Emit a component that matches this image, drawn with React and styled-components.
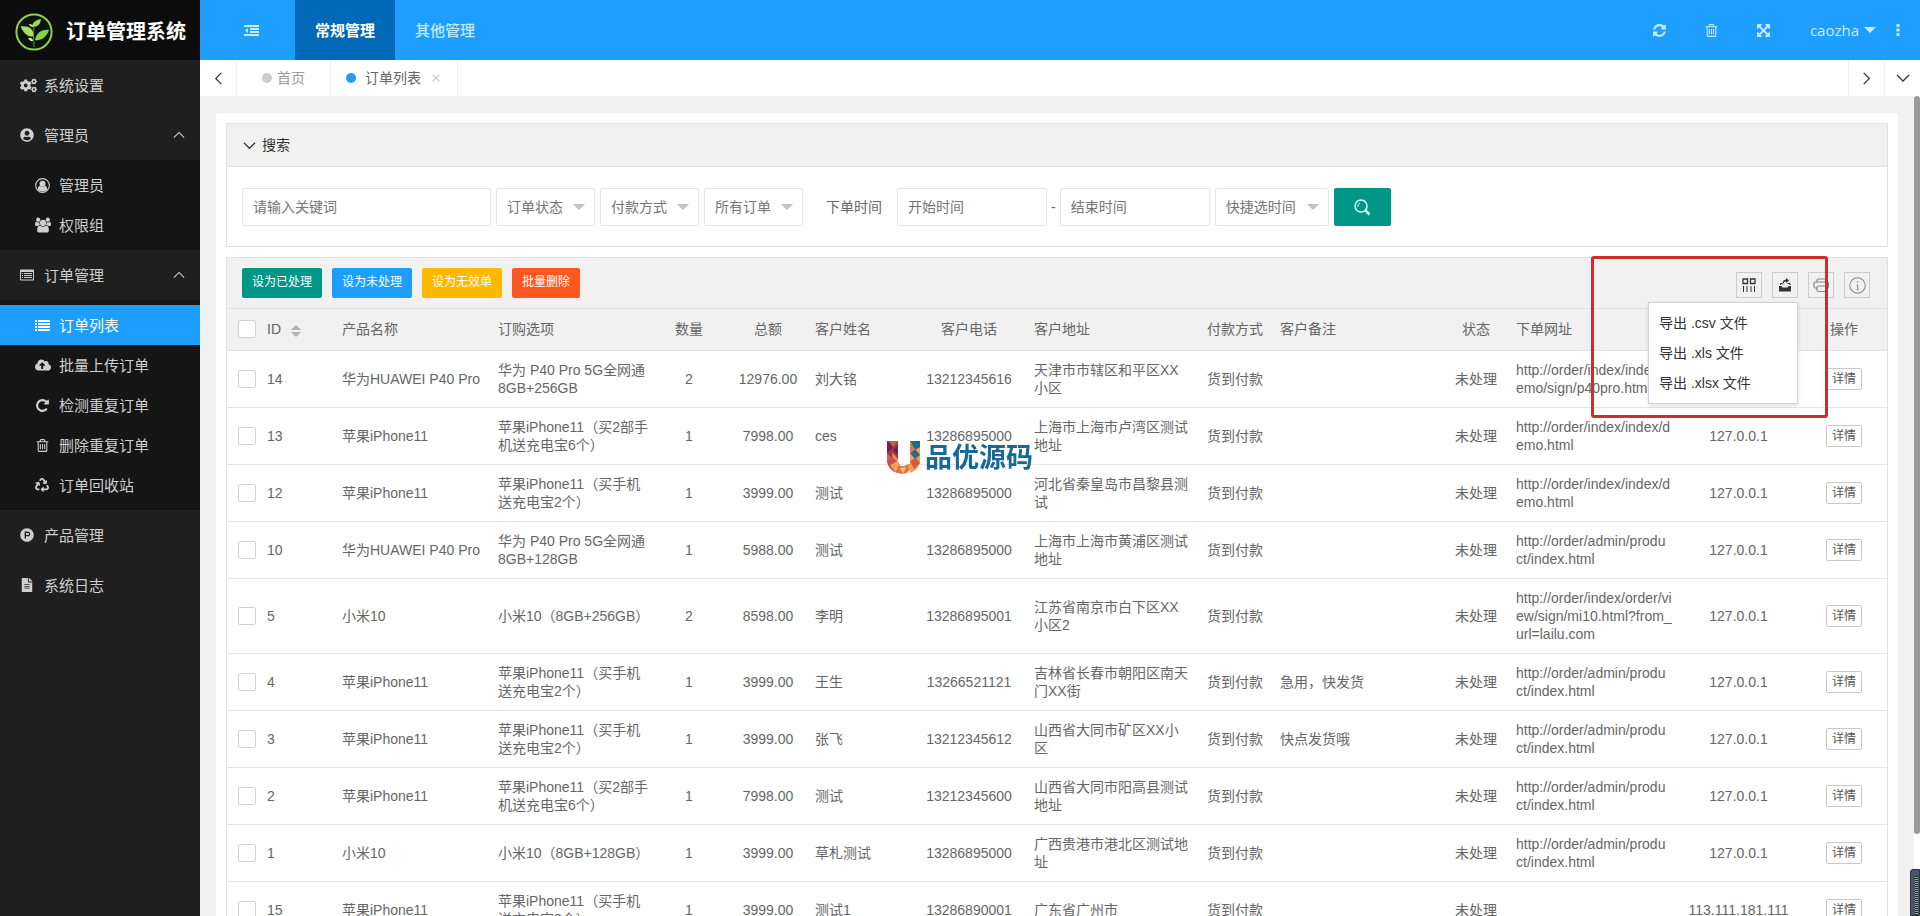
import React, { useState } from "react";
import styled, { createGlobalStyle } from "styled-components";
import {
  FaCogs,
  FaUserCircle,
  FaCloudUploadAlt,
  FaRecycle,
  FaProductHunt,
  FaFileAlt,
} from "react-icons/fa";

const GlobalStyle = createGlobalStyle`
* { box-sizing: border-box; }
body {
  margin: 0;
  color: #666;
  background: #f1f1f1;
  font: 14px/18px "Liberation Sans", "Noto Sans CJK SC", sans-serif;
}
button, input, select { font: inherit; color: inherit; }
button { cursor: pointer; }
a { color: inherit; text-decoration: none; }
ul { list-style: none; margin: 0; padding: 0; }
`;

/* ---------- icons ---------- */

const Svg = ({ size = 14, box = "0 0 1792 1792", children, ...rest }) => (
  <svg width={size} height={size} viewBox={box} fill="currentColor" aria-hidden="true" {...rest}>
    {children}
  </svg>
);

const TrashIcon = ({ size = 15 }) => (
  <Svg size={size}>
    <path d="M704 736v576q0 14-9 23t-23 9h-64q-14 0-23-9t-9-23v-576q0-14 9-23t23-9h64q14 0 23 9t9 23zm256 0v576q0 14-9 23t-23 9h-64q-14 0-23-9t-9-23v-576q0-14 9-23t23-9h64q14 0 23 9t9 23zm256 0v576q0 14-9 23t-23 9h-64q-14 0-23-9t-9-23v-576q0-14 9-23t23-9h64q14 0 23 9t9 23zm128 724v-948h-896v948q0 22 7 40.5t14.5 27 10.5 8.5h832q3 0 10.5-8.5t14.5-27 7-40.5zm-672-1076h448l-48-117q-7-9-17-11h-317q-10 2-17 11zm928 32v64q0 14-9 23t-23 9h-96v948q0 83-47 143.5t-113 60.5h-832q-66 0-113-58.5t-47-141.5v-952h-96q-14 0-23-9t-9-23v-64q0-14 9-23t23-9h309l70-167q15-37 54-63t79-26h320q40 0 79 26t54 63l70 167h309q14 0 23 9t9 23z" />
  </Svg>
);

const GroupIcon = () => (
  <Svg size={16} box="-64 0 1920 1792">
    <path d="M529 896q-162 5-265 128h-134q-82 0-138-40.5t-56-118.5q0-353 124-353 6 0 43.500 21t97.500 42.500 119 21.500q67 0 133-23-5 37-5 66 0 139 81 256zm1071 637q0 120-73 189.500t-194 69.500h-874q-121 0-194-69.500t-73-189.500q0-53 3.500-103.500t14-109 26.500-108.500 43-97.500 62-81 85.500-53.500 111.500-20q10 0 43 21.500t73 48 107 48 135 21.500 135-21.500 107-48 73-48 43-21.500q61 0 111.500 20t85.500 53.500 62 81 43 97.500 26.500 108.500 14 109 3.500 103.500zm-1024-1277q0 106-75 181t-181 75-181-75-75-181 75-181 181-75 181 75 75 181zm704 384q0 159-112.500 271.500t-271.500 112.500-271.500-112.500-112.500-271.500 112.500-271.500 271.500-112.500 271.500 112.500 112.500 271.500zm576 225q0 78-56 118.500t-138 40.500h-134q-103-123-265-128 81-117 81-256 0-29-5-66 66 23 133 23 59 0 119-21.500t97.500-42.500 43.500-21q124 0 124 353zm-128-609q0 106-75 181t-181 75-181-75-75-181 75-181 181-75 181 75 75 181z" />
  </Svg>
);

const RepeatIcon = () => (
  <Svg size={15}>
    <path d="M1664 256v448q0 26-19 45t-45 19h-448q-42 0-59-40-17-39 14-69l138-138q-148-137-349-137-104 0-198.5 40.5t-163.5 109.5-109.5 163.5-40.5 198.5 40.5 198.5 109.5 163.5 163.5 109.5 198.5 40.5q119 0 225-52t179-147q7-10 23-12 15 0 25 9l137 138q9 8 9.5 20.5t-7.5 22.5q-109 132-264 204.5t-327 72.5q-156 0-298-61t-245-164-164-245-61-298 61-298 164-245 245-164 298-61q147 0 284.5 55.5t244.5 156.5l130-129q29-31 70-14 39 17 39 59z" />
  </Svg>
);

const RefreshIcon = () => (
  <Svg size={15}>
    <path d="M1639 1056q0 5-1 7-64 268-268 434.5t-478 166.5q-146 0-282.5-55t-243.5-157l-129 129q-19 19-45 19t-45-19-19-45v-448q0-26 19-45t45-19h448q26 0 45 19t19 45-19 45l-137 137q71 66 161 102t187 36q134 0 250-65t186-179q11-17 53-117 8-23 30-23h192q13 0 22.5 9.5t9.5 22.5zm25-800v448q0 26-19 45t-45 19h-448q-26 0-45-19t-19-45 19-45l138-138q-148-137-349-137-134 0-250 65t-186 179q-11 17-53 117-8 23-30 23h-199q-13 0-22.5-9.5t-9.5-22.5v-7q65-268 270-434.5t480-166.5q146 0 284 55.5t245 156.5l130-129q19-19 45-19t45 19 19 45z" />
  </Svg>
);

const FullscreenIcon = () => (
  <Svg size={15}>
    <path d="M1411 541l-355 355 355 355 144-144q29-31 70-14 39 17 39 59v448q0 26-19 45t-45 19h-448q-42 0-59-40-17-39 14-69l144-144-355-355-355 355 144 144q31 30 14 69-17 40-59 40h-448q-26 0-45-19t-19-45v-448q0-42 40-59 39-17 69 14l144 144 355-355-355-355-144 144q-19 19-45 19-12 0-24-5-40-17-40-59v-448q0-26 19-45t45-19h448q42 0 59 40 17 39-14 69l-144 144 355 355 355-355-144-144q-31-30-14-69 17-40 59-40h448q26 0 45 19t19 45v448q0 42-39 59-13 5-25 5-26 0-45-19z" />
  </Svg>
);

const OutdentIcon = () => (
  <Svg size={15} box="0 0 15 15">
    <path d="M0 2h15v2H0zM6 5h9v2H6zM6 8h9v2H6zM0 11h15v2H0zM4 5v5L1 7.500z" />
  </Svg>
);

const ListIcon = () => (
  <Svg size={15} box="0 0 15 15">
    <path d="M0 2h2v2H0zM3 2h12v2H3zM0 5h2v2H0zM3 5h12v2H3zM0 8h2v2H0zM3 8h12v2H3zM0 11h2v2H0zM3 11h12v2H3z" />
  </Svg>
);

const ListAltIcon = () => (
  <Svg size={14} box="0 0 14 14">
    <path fillRule="evenodd" d="M1 1.500h12a1 1 0 0 1 1 1v9a1 1 0 0 1-1 1H1a1 1 0 0 1-1-1v-9a1 1 0 0 1 1-1zM1 4v7.500h12V4z" />
    <path d="M2 5h1v1H2zM4 5h8v1H4zM2 7h1v1H2zM4 7h8v1H4zM2 9h1v1H2zM4 9h8v1H4z" />
  </Svg>
);

const UserRingIcon = () => (
  <Svg size={15} box="0 0 16 16">
    <circle cx="8" cy="8" r="7.300" fill="none" stroke="currentColor" strokeWidth="1.200" />
    <circle cx="8" cy="6.200" r="3.200" />
    <path d="M2.800 12.200c.3-2.200 1.300-4 2.600-4 1.400 1.200 3.800 1.200 5.200 0 1.300 0 2.300 1.800 2.600 4-2.800 2.900-7.600 2.900-10.400 0z" />
  </Svg>
);

const DotsIcon = () => (
  <Svg size={14} box="0 0 14 14">
    <path d="M5.500 1h3v3h-3zM5.500 5.500h3v3h-3zM5.500 10h3v3h-3z" />
  </Svg>
);

const chevrons = {
  up: "M1 10l6-6 6 6",
  down: "M1 4l6 6 6-6",
  left: "M10 1L4 7l6 6",
  right: "M4 1l6 6-6 6",
  close: "M3 3l8 8M11 3l-8 8",
};

const Chevron = ({ dir, size = 12 }) => (
  <Svg size={size} box="0 0 14 14">
    <path d={chevrons[dir]} fill="none" stroke="currentColor" strokeWidth="1.300" />
  </Svg>
);

const SearchIcon = () => (
  <Svg size={18} box="0 0 18 18">
    <g fill="none" stroke="currentColor">
      <circle cx="8" cy="8" r="6" strokeWidth="1.500" />
      <path d="M5 9a3.200 3.200 0 0 1 2-4" />
      <path d="M12.500 12.500l4 4" strokeWidth="2.600" />
    </g>
  </Svg>
);

const ColumnsIcon = () => (
  <Svg size={14} box="0 0 14 14">
    <path d="M1 1h4.500v4.500H1zM8.500 1H13v4.500H8.500z" fill="none" stroke="currentColor" strokeWidth="1.300" />
    <path d="M1 8h1v6H1zM4.500 8h1v6h-1zM8.500 8h1v6h-1zM12 8h1v6h-1z" />
  </Svg>
);

const ExportIcon = () => (
  <Svg size={14} box="0 0 14 14">
    <path d="M1 8h2.500l1 1.500h5l1-1.500H13v5.500H1z" />
    <path d="M2.500 7V5.500h2M9.500 5.500H12V7" fill="none" stroke="currentColor" />
    <path d="M5 8c0-3 .8-4.500 3-4.500V5l3-2.500L8 0v1.800C5 1.800 4 4 5 8z" />
  </Svg>
);

const PrintIcon = () => (
  <Svg size={16} box="0 0 16 16">
    <g fill="none" stroke="currentColor" strokeWidth="1.200" strokeLinejoin="round">
      <path d="M4 5V3.500A1.500 1.500 0 0 1 5.500 2H12a1.500 1.500 0 0 1 1.500 1.500V5" />
      <path d="M4 11H2.500A1.500 1.500 0 0 1 1 9.500v-3A1.500 1.500 0 0 1 2.500 5H14a1.500 1.500 0 0 1 1.500 1.500v3A1.500 1.500 0 0 1 14 11h-.5" />
      <rect x="4" y="9" width="9.500" height="5.500" rx="1.500" />
    </g>
  </Svg>
);

const InfoIcon = () => (
  <Svg size={17} box="0 0 16 16">
    <circle cx="8" cy="8" r="7.300" fill="none" stroke="currentColor" />
    <path d="M7.500 4h1.200v1.400H7.500zM7 7h1.600v4.200h.8v.8H6.800v-.8h.8V7.800H7z" />
  </Svg>
);

const LeafLogo = () => (
  <svg width="38" height="38" viewBox="0 0 38 38" aria-hidden="true">
    <circle cx="19" cy="19" r="17.600" fill="#0c1408" stroke="#93cc4a" strokeWidth="2" />
    <path d="M5.500 13.500c7-1 13 1 13.500 10-7 .5-10-3-13.500-10z" fill="#a6dc62" />
    <path d="M34 17c-3 8-8 11-14 10 1-7 7-11 14-10z" fill="#86d04a" />
    <path d="M26 6c-.5 5-3 8-9 8 0-4 3-7 9-8z" fill="#9ad85c" />
    <path d="M14 11c2-.5 4 1 4 3-2 0-3.500-1-4-3zM13 25c2-.5 5 0 5 3-2 .500-4-.5-5-3z" fill="#c9efb0" />
    <path d="M19 14c-1 6 0 12 0 20" fill="none" stroke="#5f9e38" />
  </svg>
);

const BrandMark = () => (
  <svg width="34" height="34" viewBox="0 0 34 34" aria-hidden="true">
    <path d="M0 0h11v18l-5 6-6-6z" fill="#a3344e" />
    <path d="M0 0l6 6-6 6zM11 4v10L6 9z" fill="#6f2645" />
    <path d="M2 0h9L6 6zM0 12l6 6-6 4z" fill="#d05a55" />
    <path d="M5 11l6 7-5 6z" fill="#e98a55" />
    <path d="M0 20l6-3 6 5 4 10C7 33 1 28 0 20z" fill="#c5504f" />
    <path d="M3 24l8-4 3 7-6 4z" fill="#f0a35e" />
    <path d="M11 25h6l8-3-4 9c-4 3-8 2-12 0z" fill="#e2704a" />
    <path d="M13 27l6-1-3 7z" fill="#f6c17a" />
    <path d="M23 0h10v20c0 5-4 10-10 12l-2-7c2-1 2-3 2-5z" fill="#f0a050" />
    <path d="M23 0h10v6l-5 3zM23 12l5-4 5 6-5 4z" fill="#1f6d86" />
    <path d="M23 2l5 6-5 5z" fill="#e8724a" />
    <path d="M23 20l6-3 4 5-6 6z" fill="#d2594c" />
  </svg>
);

/* ---------- shell ---------- */

const Shell = styled.div`
display:flex;
height:100vh;
overflow:hidden;
`;

const Sidebar = styled.aside`
flex:0 0 200px;
background:#1f1f1f;
color:#cfcfcf;
font-size:15px;
font-family:"Open Sans", "Noto Sans CJK SC", sans-serif;
`;

const Brand = styled.h1`
display:flex;
align-items:center;
gap:13px;
height:60px;
margin:0;
padding:4px 0 0 15px;
background:#0c0c0c;
color:#fff;
font-size:20px;
font-weight:700;
white-space:nowrap;
`;

const MenuLink = styled.a`
display:flex;
align-items:center;
gap:10px;
height:${(p) => (p.$sub ? 40 : 50)}px;
padding:0 15px 0 ${(p) => (p.$sub ? 35 : 20)}px;
background:${(p) => (p.$active ? "#1e9fff" : "transparent")};
color:${(p) => (p.$active ? "#fff" : "inherit")};
`;

const MenuIcon = styled.span`
display:flex;
width:14px;

svg{
    flex:none;
}
`;

const MenuText = styled.span`
flex:1;
`;

const SubMenu = styled.ul`
padding:5px 0;
background:#151515;
`;

const Main = styled.div`
flex:1;
min-width:0;
display:flex;
flex-direction:column;
`;

const Header = styled.header`
display:flex;
justify-content:space-between;
flex:0 0 60px;
background:#1e9fff;
color:#c5ecff;
font-size:15px;
font-family:"Open Sans", "Noto Sans CJK SC", sans-serif;
`;

const HeaderGroup = styled.div`
display:flex;
align-items:center;
`;

const IconButton = styled.button`
display:flex;
align-items:center;
justify-content:center;
width:${(p) => p.$w || 52}px;
height:100%;
padding:0;
border:0;
background:none;
`;

const MenuToggle = styled(IconButton)`
width:95px;
padding-left:8px;
`;

const TopLink = styled.a`
padding:0 20px;
line-height:60px;
background:${(p) => (p.$active ? "#0069b7" : "transparent")};
color:${(p) => (p.$active ? "#fff" : "inherit")};
font-weight:${(p) => (p.$active ? 700 : 500)};
`;

const UserButton = styled.button`
display:flex;
align-items:center;
gap:5px;
height:100%;
padding:0 0 0 20px;
border:0;
background:none;
`;

const Caret = styled.i`
border:6px solid transparent;
border-bottom-width:0;
border-top-color:${(p) => p.$color || "currentColor"};
`;

const TabBar = styled.nav`
display:flex;
flex:0 0 36px;
background:#fff;
color:#333;
`;

const TabArrow = styled.button`
display:flex;
align-items:center;
justify-content:center;
width:${(p) => p.$w || 36}px;
padding:0;
border:0 solid #f0f0f0;
border-width:${(p) => (p.$end ? "0 0 0 1px" : "0 1px 0 0")};
background:none;
`;

const Tab = styled.a`
display:flex;
align-items:center;
padding:0 ${(p) => (p.$active ? 15 : 25)}px;
gap:${(p) => (p.$active ? 9 : 5)}px;
border-right:1px solid #f0f0f0;
color:${(p) => (p.$active ? "#666" : "#999")};
`;

const Dot = styled.i`
width:10px;
height:10px;
border-radius:50%;
background:${(p) => (p.$active ? "#1e9fff" : "#ccc")};
`;

const TabClose = styled.button`
display:flex;
padding:0;
border:0;
background:none;
color:#c2c2c2;
`;

const TabSpace = styled.div`
flex:1;
`;

const Page = styled.main`
flex:1;
min-height:0;
display:flex;
overflow:hidden;
`;

const PageBody = styled.div`
flex:1;
min-width:0;
padding:17px 16px 0;
`;

const ScrollTrack = styled.div`
flex:0 0 6px;
background:#fff;
`;

const ScrollThumb = styled.div`
height:90%;
border-radius:3px;
background:#9b9b9b;
`;

const Card = styled.div`
padding:10px;
border-radius:2px;
background:#fff;
`;

/* ---------- search ---------- */

const Panel = styled.section`
margin-bottom:10px;
border:1px solid #e2e2e2;
`;

const PanelTitle = styled.h2`
display:flex;
align-items:center;
gap:6px;
height:43px;
margin:0;
padding:0 16px;
border-bottom:1px solid #e2e2e2;
background:#f1f1f1;
color:#333;
font-size:14px;
font-weight:400;
`;

const SearchForm = styled.form`
display:flex;
align-items:center;
gap:5px;
padding:21px 15px 20px;
`;

const Field = styled.input`
width:${(p) => p.$w}px;
height:38px;
padding:0 10px;
border:1px solid #e6e6e6;
border-radius:2px;
background:#fff;
outline:0;

&::placeholder{
    color:#757575;
}
`;

const DateRange = styled.div`
display:flex;
align-items:center;
gap:4px;
`;

const SelectBox = styled.span`
position:relative;
width:${(p) => p.$w}px;

select{
    width:100%;
    height:38px;
    padding:0 10px;
    border:1px solid #e6e6e6;
    border-radius:2px;
    background:#fff;
    color:#757575;
    appearance:none;
}
i{
    position:absolute;
    top:16px;
    right:10px;
    pointer-events:none;
}
`;

const FieldLabel = styled.label`
padding:0 10px 0 18px;
`;

const SearchButton = styled.button`
display:flex;
align-items:center;
justify-content:center;
width:57px;
height:38px;
padding:0;
border:0;
border-radius:2px;
background:#009688;
color:#d9fffa;
`;

/* ---------- toolbar ---------- */

const Toolbar = styled.div`
position:relative;
display:flex;
align-items:center;
gap:10px;
height:51px;
padding:0 17px 0 15px;
border-bottom:1px solid #e2e2e2;
background:#f1f1f1;
`;

const ActionButton = styled.button`
height:30px;
padding:0 10px 2px;
border:0;
border-radius:2px;
background:${(p) => p.$bg};
color:#fff;
font-size:12px;
`;

const Tools = styled.div`
display:flex;
gap:10px;
margin:4px 0 0 auto;
`;

const ToolSlot = styled.div`
position:relative;
`;

const ToolButton = styled.button`
display:flex;
align-items:center;
justify-content:center;
width:26px;
height:26px;
padding:0;
border:1px solid #ccc;
background:none;
color:${(p) => (p.$muted ? "#888" : "#333")};
`;

const ExportMenu = styled.ul`
position:absolute;
z-index:2;
top:30px;
right:0;
width:150px;
padding:5px 0;
border:1px solid #d2d2d2;
background:#fff;
box-shadow:0 2px 4px rgba(0, 0, 0, 0.12);

button{
    display:block;
    width:100%;
    height:30px;
    padding:0 10px;
    border:0;
    background:none;
    color:#333;
    text-align:left;
}
`;

const Highlight = styled.div`
position:absolute;
z-index:3;
top:-2px;
right:59px;
width:237px;
height:162px;
border:3px solid #c9302c;
border-radius:3px;
pointer-events:none;
`;

/* ---------- table ---------- */

const Table = styled.table`
width:100%;
table-layout:fixed;
border-collapse:collapse;
`;

const Cell = styled.td`
padding:10px 4px;
border-bottom:1px solid #e6e6e6;
text-align:${(p) => p.$align || "left"};
font-weight:400;
word-break:break-all;
`;

const HeadRow = styled.tr`
height:41px;
background:#f1f1f1;
`;

const HeadCell = styled(Cell).attrs({ as: "th", scope: "col" })`
padding:0 4px;
border-color:#e2e2e2;
`;

const Row = styled.tr`
height:57px;
`;

const CheckBox = styled.input.attrs({ type: "checkbox" })`
display:block;
width:18px;
height:18px;
margin:0 0 0 7px;
border:1px solid #d2d2d2;
border-radius:2px;
background:#fff;
appearance:none;

&:checked{
    background:#5fb878;
}
`;

const SortBox = styled.span`
display:inline-flex;
flex-direction:column;
gap:2px;
margin-left:10px;
vertical-align:middle;

i{
    border:5px solid transparent;
}
i:first-child{
    border-top-width:0;
    border-bottom-color:#b2b2b2;
}
i:last-child{
    border-bottom-width:0;
    border-top-color:#b2b2b2;
}
`;

const DetailButton = styled.button`
height:22px;
padding:0 5px;
border:1px solid #c9c9c9;
border-radius:2px;
background:#fff;
color:#555;
font-size:12px;
line-height:20px;
`;

const Watermark = styled.div`
position:fixed;
z-index:4;
top:50%;
left:50%;
display:flex;
align-items:center;
gap:4px;
transform:translate(-50%, -50%);
color:#156a9a;
font-size:27px;
line-height:34px;
font-weight:700;
white-space:nowrap;
pointer-events:none;
`;

const Meter = styled.div`
position:fixed;
right:0;
bottom:0;
width:10px;
height:47px;
padding:6px 1px 0 4px;
border:1px solid #2b3242;
border-radius:3px 0 0 0;
background:#4b5568;

&::before{
    content:"";
    display:block;
    height:100%;
    background:repeating-linear-gradient(#1d2a22 0 1px, #8fb46a 1px 2px);
}
`;

/* ---------- data ---------- */

const menu = [
  { text: "系统设置", icon: <FaCogs size={17} /> },
  {
    text: "管理员",
    icon: <FaUserCircle size={14} />,
    children: [
      { text: "管理员", icon: <UserRingIcon /> },
      { text: "权限组", icon: <GroupIcon /> },
    ],
  },
  {
    text: "订单管理",
    icon: <ListAltIcon />,
    children: [
      { text: "订单列表", icon: <ListIcon />, active: true },
      { text: "批量上传订单", icon: <FaCloudUploadAlt size={16} /> },
      { text: "检测重复订单", icon: <RepeatIcon /> },
      { text: "删除重复订单", icon: <TrashIcon /> },
      { text: "订单回收站", icon: <FaRecycle size={14} /> },
    ],
  },
  { text: "产品管理", icon: <FaProductHunt size={14} /> },
  { text: "系统日志", icon: <FaFileAlt size={14} /> },
];

const columns = [
  { key: "id", title: "ID", width: 75, sort: true },
  { key: "product", title: "产品名称", width: 156 },
  { key: "option", title: "订购选项", width: 159 },
  { key: "count", title: "数量", width: 72, align: "center" },
  { key: "total", title: "总额", width: 86, align: "center" },
  { key: "name", title: "客户姓名", width: 97 },
  { key: "phone", title: "客户电话", width: 122, align: "center" },
  { key: "address", title: "客户地址", width: 164 },
  { key: "pay", title: "付款方式", width: 82, align: "center" },
  { key: "remark", title: "客户备注" },
  { key: "status", title: "状态", width: 72, align: "center" },
  { key: "url", title: "下单网址", width: 164 },
  { key: "ip", title: "IP", width: 125, align: "center" },
];

const demoUrl = "http://order/index/index/demo.html";
const adminUrl = "http://order/admin/product/index.html";
const huawei = "华为HUAWEI P40 Pro";
const iphone = "苹果iPhone11";
const twoPhones = "苹果iPhone11（买2部手机送充电宝6个）";
const onePhone = "苹果iPhone11（买手机送充电宝2个）";

const toOrder = ([id, product, option, count, total, name, phone, address, url, remark = "", ip = "127.0.0.1"]) => ({
  id, product, option, count, total, name, phone, address, url, remark, ip,
  pay: "货到付款",
  status: "未处理",
});

const orders = [
  [14, huawei, "华为 P40 Pro 5G全网通 8GB+256GB", 2, "12976.00", "刘大铭", "13212345616", "天津市市辖区和平区XX小区", "http://order/index/index/demo/sign/p40pro.html"],
  [13, iphone, twoPhones, 1, "7998.00", "ces", "13286895000", "上海市上海市卢湾区测试地址", demoUrl],
  [12, iphone, onePhone, 1, "3999.00", "测试", "13286895000", "河北省秦皇岛市昌黎县测试", demoUrl],
  [10, huawei, "华为 P40 Pro 5G全网通 8GB+128GB", 1, "5988.00", "测试", "13286895000", "上海市上海市黄浦区测试地址", adminUrl],
  [5, "小米10", "小米10（8GB+256GB）", 2, "8598.00", "李明", "13286895001", "江苏省南京市白下区XX小区2", "http://order/index/order/view/sign/mi10.html?from_url=lailu.com"],
  [4, iphone, onePhone, 1, "3999.00", "王生", "13266521121", "吉林省长春市朝阳区南天门XX街", adminUrl, "急用，快发货"],
  [3, iphone, onePhone, 1, "3999.00", "张飞", "13212345612", "山西省大同市矿区XX小区", adminUrl, "快点发货哦"],
  [2, iphone, twoPhones, 1, "7998.00", "测试", "13212345600", "山西省大同市阳高县测试地址", adminUrl],
  [1, "小米10", "小米10（8GB+128GB）", 1, "3999.00", "草札测试", "13286895000", "广西贵港市港北区测试地址", adminUrl],
  [15, iphone, onePhone, 1, "3999.00", "测试1", "13286890001", "广东省广州市", "", "", "113.111.181.111"],
].map(toOrder);

/* ---------- parts ---------- */

function MenuItem({ item, sub }) {
  return (
    <li>
      <MenuLink href="#" $sub={sub} $active={item.active}>
        <MenuIcon>{item.icon}</MenuIcon>
        <MenuText>{item.text}</MenuText>
        {item.children && <Chevron dir="up" />}
      </MenuLink>
      {item.children && (
        <SubMenu>
          {item.children.map((child) => (
            <MenuItem key={child.text} item={child} sub />
          ))}
        </SubMenu>
      )}
    </li>
  );
}

function SelectField({ label, width }) {
  return (
    <SelectBox $w={width}>
      <select aria-label={label}>
        <option>{label}</option>
      </select>
      <Caret $color="#c2c2c2" />
    </SelectBox>
  );
}

function SearchPanel() {
  return (
    <Panel>
      <PanelTitle>
        <Chevron dir="down" size={13} />
        搜索
      </PanelTitle>
      <SearchForm onSubmit={(e) => e.preventDefault()}>
        <Field $w={249} placeholder="请输入关键词" aria-label="请输入关键词" />
        <SelectField label="订单状态" width={99} />
        <SelectField label="付款方式" width={99} />
        <SelectField label="所有订单" width={99} />
        <FieldLabel htmlFor="start">下单时间</FieldLabel>
        <DateRange>
          <Field id="start" $w={150} placeholder="开始时间" />
          -
          <Field $w={150} placeholder="结束时间" aria-label="结束时间" />
        </DateRange>
        <SelectField label="快捷选时间" width={114} />
        <SearchButton aria-label="搜索">
          <SearchIcon />
        </SearchButton>
      </SearchForm>
    </Panel>
  );
}

function TableToolbar() {
  const [open, setOpen] = useState(true);

  return (
    <Toolbar>
      <ActionButton $bg="#009688">设为已处理</ActionButton>
      <ActionButton $bg="#1e9fff">设为未处理</ActionButton>
      <ActionButton $bg="#ffb800">设为无效单</ActionButton>
      <ActionButton $bg="#ff5722">批量删除</ActionButton>
      <Tools>
        <ToolButton aria-label="筛选列">
          <ColumnsIcon />
        </ToolButton>
        <ToolSlot>
          <ToolButton aria-label="导出" onClick={() => setOpen(!open)}>
            <ExportIcon />
          </ToolButton>
          {open && (
            <ExportMenu>
              {["csv", "xls", "xlsx"].map((type) => (
                <li key={type}>
                  <button>导出 .{type} 文件</button>
                </li>
              ))}
            </ExportMenu>
          )}
        </ToolSlot>
        <ToolButton $muted aria-label="打印">
          <PrintIcon />
        </ToolButton>
        <ToolButton $muted aria-label="提示">
          <InfoIcon />
        </ToolButton>
      </Tools>
      <Highlight />
    </Toolbar>
  );
}

function OrderTable() {
  return (
    <Table>
      <colgroup>
        <col width="36" />
        {columns.map((c) => (
          <col key={c.key} width={c.width} />
        ))}
        <col width="86" />
      </colgroup>
      <thead>
        <HeadRow>
          <HeadCell>
            <CheckBox aria-label="全选" />
          </HeadCell>
          {columns.map((c) => (
            <HeadCell key={c.key} $align={c.align}>
              {c.title}
              {c.sort && (
                <SortBox>
                  <i />
                  <i />
                </SortBox>
              )}
            </HeadCell>
          ))}
          <HeadCell $align="center">操作</HeadCell>
        </HeadRow>
      </thead>
      <tbody>
        {orders.map((order) => (
          <Row key={order.id}>
            <Cell>
              <CheckBox aria-label={`订单 ${order.id}`} />
            </Cell>
            {columns.map((c) => (
              <Cell key={c.key} $align={c.align}>
                {order[c.key]}
              </Cell>
            ))}
            <Cell $align="center">
              <DetailButton>详情</DetailButton>
            </Cell>
          </Row>
        ))}
      </tbody>
    </Table>
  );
}

export default function App() {
  return (
    <Shell>
      <GlobalStyle />
      <Sidebar>
        <Brand>
          <LeafLogo />
          订单管理系统
        </Brand>
        <ul>
          {menu.map((item) => (
            <MenuItem key={item.text} item={item} />
          ))}
        </ul>
      </Sidebar>
      <Main>
        <Header>
          <HeaderGroup>
            <MenuToggle aria-label="收起菜单">
              <OutdentIcon />
            </MenuToggle>
            <TopLink href="#" $active>常规管理</TopLink>
            <TopLink href="#">其他管理</TopLink>
          </HeaderGroup>
          <HeaderGroup>
            <IconButton aria-label="刷新"><RefreshIcon /></IconButton>
            <IconButton aria-label="清理缓存"><TrashIcon /></IconButton>
            <IconButton aria-label="全屏"><FullscreenIcon /></IconButton>
            <UserButton>
              caozha
              <Caret />
            </UserButton>
            <IconButton $w={44} aria-label="更多"><DotsIcon /></IconButton>
          </HeaderGroup>
        </Header>
        <TabBar>
          <TabArrow $w={37} aria-label="向左"><Chevron dir="left" size={13} /></TabArrow>
          <Tab href="#">
            <Dot />
            首页
          </Tab>
          <Tab href="#" $active>
            <Dot $active />
            订单列表
            <TabClose aria-label="关闭"><Chevron dir="close" /></TabClose>
          </Tab>
          <TabSpace />
          <TabArrow $end aria-label="向右"><Chevron dir="right" size={13} /></TabArrow>
          <TabArrow $end aria-label="标签操作"><Chevron dir="down" size={14} /></TabArrow>
        </TabBar>
        <Page>
          <PageBody>
            <Card>
              <SearchPanel />
              <Panel>
                <TableToolbar />
                <OrderTable />
              </Panel>
            </Card>
          </PageBody>
          <ScrollTrack>
            <ScrollThumb />
          </ScrollTrack>
        </Page>
      </Main>
      <Watermark>
        <BrandMark />
        品优源码
      </Watermark>
      <Meter />
    </Shell>
  );
}
